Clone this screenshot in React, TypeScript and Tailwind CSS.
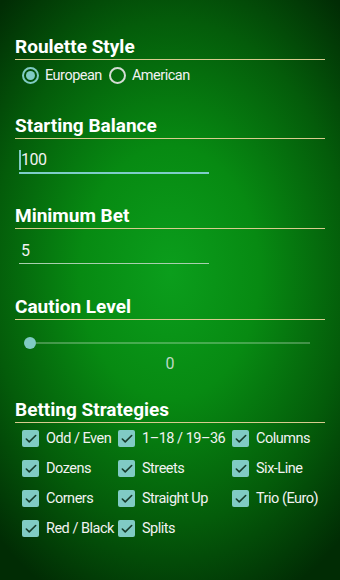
import { Check } from "lucide-react"

const strategies = [
  ["Odd / Even", "1–18 / 19–36", "Columns"],
  ["Dozens", "Streets", "Six-Line"],
  ["Corners", "Straight Up", "Trio (Euro)"],
  ["Red / Black", "Splits", ""],
]

function Heading({ children, className = "" }: { children: string; className?: string }) {
  return (
    <div
      className={`text-[19px] font-bold leading-[22px] pb-[1px] text-white border-b-[1.5px] border-[#d8cb8e] ${className}`}
    >
      {children}
    </div>
  )
}

function Radio({ checked, label }: { checked: boolean; label: string }) {
  return (
    <div className="flex items-center">
      <div
        className={`w-[17px] h-[17px] rounded-full border-2 flex items-center justify-center ${
          checked ? "border-[#80cbc4]" : "border-[#d4dcd4]"
        }`}
      >
        {checked && <div className="w-[9px] h-[9px] rounded-full bg-[#80cbc4]" />}
      </div>
      <span className="ml-[6px] text-[14.5px] tracking-[-0.5px] text-[#f2f2f2]">{label}</span>
    </div>
  )
}

function CheckItem({ label }: { label: string }) {
  if (!label) return <div />
  return (
    <div className="flex items-center h-[30px]">
      <div className="w-[17px] h-[17px] rounded-[2px] bg-[#80cbc4] flex items-center justify-center">
        <Check className="w-[14px] h-[14px] text-[#163b2a]" strokeWidth={2.75} />
      </div>
      <span className="ml-[7px] text-[14.5px] tracking-[-0.5px] text-[#f2f2f2] whitespace-nowrap">{label}</span>
    </div>
  )
}

export default function App() {
  return (
    <div className="w-full h-[580px] overflow-hidden font-['Roboto',sans-serif] bg-[radial-gradient(ellipse_75%_62%_at_50%_47%,#0b9e1c_0%,#078a12_35%,#045c0a_70%,#012c04_100%)]">
      <div className="px-[15px] pt-[36px]">
        <Heading>Roulette Style</Heading>
        <div className="mt-[5.5px] h-[20px] pl-[7px] flex items-center gap-[7px]">
          <Radio checked label="European" />
          <Radio checked={false} label="American" />
        </div>

        <Heading className="mt-[29px]">Starting Balance</Heading>
        <div className="mt-[11.5px] ml-[4px] w-[190px] pb-[2px] border-b-2 border-[#7ecdc9]">
          <div className="h-[20px] flex items-center">
            <div className="w-[2px] h-[20px] bg-[#80cbc4]" />
            <span className="text-[16px] tracking-[-0.5px] text-[#f2f2f2] leading-[20px]">100</span>
          </div>
        </div>

        <Heading className="mt-[31px]">Minimum Bet</Heading>
        <div className="mt-[11.5px] ml-[4px] w-[190px] pb-[2px] border-b-[1.5px] border-[#a9cfae]">
          <div className="h-[20px] flex items-center pl-[2px]">
            <span className="text-[16px] tracking-[-0.5px] text-[#f2f2f2] leading-[20px]">5</span>
          </div>
        </div>

        <Heading className="mt-[32.5px]">Caution Level</Heading>
        <div className="mt-[16.5px] h-[12px] pl-[9px] pr-[15px] flex items-center">
          <div className="w-[12px] h-[12px] rounded-full bg-[#80cbc4] shrink-0" />
          <div className="flex-1 h-[2px] bg-[#ffffff]/25" />
        </div>
        <div className="mt-[5px] h-[20px] text-center text-[16px] leading-[20px] text-[#bcd9c4]">0</div>

        <Heading className="mt-[25px]">Betting Strategies</Heading>
        <div className="mt-[1px] grid grid-cols-[96px_114px_1fr] pl-[7px]">
          {strategies.flat().map((s, i) => (
            <CheckItem key={i} label={s} />
          ))}
        </div>
      </div>
    </div>
  )
}
